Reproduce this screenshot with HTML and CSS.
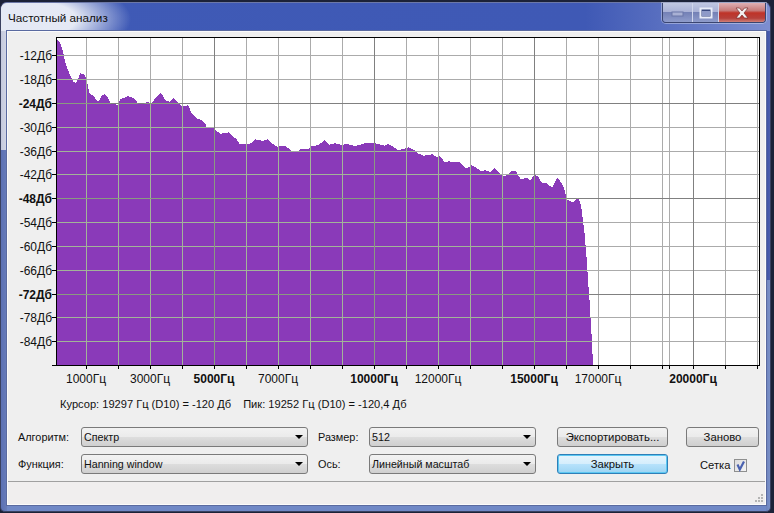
FILE: index.html
```html
<!DOCTYPE html>
<html lang="ru">
<head>
<meta charset="utf-8">
<title>Частотный анализ</title>
<link rel="stylesheet" href="styles.css">
</head>
<body>
<div class="window">
  <header class="titlebar">
    <span class="title">Частотный анализ</span>
    <div class="caption">
      <div class="cap cap-min"><svg width="14" height="8" viewBox="0 0 14 8"><rect x="1" y="3" width="11" height="4" fill="#a8b0d4" stroke="#6a76a8"/></svg></div>
      <div class="cap cap-max"><svg width="14" height="12" viewBox="0 0 14 12"><rect x="1.500" y="1.500" width="11" height="9" fill="#3a4a80" stroke="#e8ecf8" stroke-width="2"/><rect x="3" y="4" width="8" height="5" fill="#8e9ac8"/></svg></div>
      <div class="cap cap-close"><svg width="16" height="12" viewBox="0 0 16 12"><path d="M2 1h3.500L8 4l2.500-3H14l-4 5 4 5h-3.500L8 8l-2.500 3H2l4-5z" fill="#f4f0f0" stroke="#7a3030" stroke-width=".7"/></svg></div>
    </div>
  </header>
  <main class="client">
    <svg class="chart" width="758" height="356" viewBox="8 32 758 356">
      <defs>
        <clipPath id="spectrum-clip"><polygon id="sp" points="57,38 57,39 60,43 62.700,50 64.700,60 67.300,68 70,75 73.300,81.700 76,82.700 78.300,78.300 80,73.300 85,75 87.300,83.300 89.300,93.300 93.300,95.700 96.700,100.700 99.300,100.700 101.700,95.700 105,94 108.300,98.300 111,104.300 115,104.300 118.300,105 120,99.300 128.300,96 135,99 138.300,104 143.300,104 146.700,102.300 151.700,102.700 156,97.700 160,93 162.700,95 165,100 170,101.700 173.300,98.300 176.700,100.700 180,105 182.700,106.300 188.300,105.300 191.700,113.300 196.700,118.300 201.700,120 205,123.300 207.300,128.300 213.300,128 216.700,131 220,133.700 225,133.300 228.300,132.300 233.300,136.700 236.700,139.300 240,144.500 246.700,144 251.700,143.300 255,139.300 258,140 263,141 268,139.300 273,144 277,146.700 285,146 291.700,150.700 296,152.700 300,149.300 308,149.300 311.700,146 318,145.300 325,140 329,144.700 335,143.300 341.700,145 347,144 355,146 365,143.300 373,143 378,144 385,145.700 387.700,144 393,146.700 398,150 405,148.700 408,147.300 413,149.300 418,153.300 423,155.700 430,155 431.700,154 436.700,156.700 440,156 445,162.700 448,161.300 460,162.300 465,167.700 468,167.700 471.700,165 478,169 480.700,171.700 485,170 490,172 495,168 498,171.700 504,176.700 508,174.300 511.700,171 516,171.300 520.700,179.300 526.700,177.700 530,180.700 534,175 538,176 541.700,182.700 547,183.300 552,187.700 556.700,178.300 558,178 563,185.700 565,191.700 566.700,199.300 573,202.700 577.700,197.300 580,201.700 581.700,210 583.300,223.300 584.300,230 585.700,246.700 587,263 588,280 589.300,296.700 590.300,313 591.700,336.700 593,365 57,365"/></clipPath>
        <path id="grid-light" d="M86.500 38V365M118.500 38V365M150.500 38V365M182.500 38V365M246.500 38V365M278.500 38V365M310.500 38V365M342.500 38V365M406.500 38V365M438.500 38V365M470.500 38V365M502.500 38V365M566.500 38V365M598.500 38V365M630.500 38V365M662.500 38V365M669.500 38V365M725.500 38V365M757.500 38V365M57 55.500H759M57 79.500H759M57 127.500H759M57 151.500H759M57 174.500H759M57 222.500H759M57 246.500H759M57 270.500H759M57 317.500H759M57 341.500H759"/>
        <path id="grid-dark" d="M214.500 38V365M374.500 38V365M534.500 38V365M693.500 38V365M57 103.500H759M57 198.500H759M57 294.500H759"/>
      </defs>
      <rect class="plot-bg" x="57" y="38" width="702" height="327"/>
      <use href="#sp" class="spectrum"/>
      <use href="#grid-light" class="line-light"/>
      <use href="#grid-dark" class="line-dark"/>
      <g clip-path="url(#spectrum-clip)">
        <use href="#grid-light" class="over-light"/>
        <use href="#grid-dark" class="over-dark"/>
      </g>
      <path class="axis" d="M56.500 37.500H759.500V365.500H56.500Z"/>
      <path class="axis" d="M52 55.500h4M52 79.500h4M52 103.500h4M52 127.500h4M52 151.500h4M52 174.500h4M52 198.500h4M52 222.500h4M52 246.500h4M52 270.500h4M52 294.500h4M52 317.500h4M52 341.500h4M52 365.500h4M86.500 366v3M118.500 366v3M150.500 366v3M182.500 366v3M214.500 366v3M246.500 366v3M278.500 366v3M310.500 366v3M342.500 366v3M374.500 366v3M406.500 366v3M438.500 366v3M470.500 366v3M502.500 366v3M534.500 366v3M566.500 366v3M598.500 366v3M630.500 366v3M662.500 366v3M669.500 366v3M693.500 366v3M725.500 366v3M757.500 366v3"/>
      <g class="ylabels">
        <text x="52" y="60">-12Дб</text>
        <text x="52" y="84">-18Дб</text>
        <text x="52" y="108" class="strong">-24Дб</text>
        <text x="52" y="132">-30Дб</text>
        <text x="52" y="156">-36Дб</text>
        <text x="52" y="179">-42Дб</text>
        <text x="52" y="203" class="strong">-48Дб</text>
        <text x="52" y="227">-54Дб</text>
        <text x="52" y="251">-60Дб</text>
        <text x="52" y="275">-66Дб</text>
        <text x="52" y="299" class="strong">-72Дб</text>
        <text x="52" y="322">-78Дб</text>
        <text x="52" y="346">-84Дб</text>
      </g>
      <g class="xlabels">
        <text x="86" y="383">1000Гц</text>
        <text x="150" y="383">3000Гц</text>
        <text x="214" y="383" class="strong">5000Гц</text>
        <text x="278" y="383">7000Гц</text>
        <text x="374" y="383" class="strong">10000Гц</text>
        <text x="438" y="383">12000Гц</text>
        <text x="534" y="383" class="strong">15000Гц</text>
        <text x="598" y="383">17000Гц</text>
        <text x="693" y="383" class="strong">20000Гц</text>
      </g>
    </svg>
    <p class="readout"><span>Курсор: 19297 Гц (D10) = -120 Дб</span><span>Пик: 19252 Гц (D10) = -120,4 Дб</span></p>
    <section class="controls">
      <label class="lbl">Алгоритм:</label>
      <div class="combo">Спектр</div>
      <label class="lbl lbl-mid">Размер:</label>
      <div class="combo">512</div>
      <button class="btn btn-wide">Экспортировать...</button>
      <button class="btn btn-last">Заново</button>
      <label class="lbl">Функция:</label>
      <div class="combo">Hanning window</div>
      <label class="lbl lbl-mid">Ось:</label>
      <div class="combo">Линейный масштаб</div>
      <button class="btn btn-wide btn-default">Закрыть</button>
      <div class="gridtoggle"><span>Сетка</span><span class="check"><svg width="13" height="13" viewBox="0 0 13 13"><path d="M3.500 5.500L5.800 10.500 10 2.500" fill="none" stroke="#4a62b0" stroke-width="2.200"/></svg></span></div>
    </section>
    <footer class="statusbar">
      <svg class="grip" width="10" height="10" viewBox="0 0 10 10"><path d="M7 0h2v2H7zM4 3h2v2H4zM7 3h2v2H7zM1 6h2v2H1zM4 6h2v2H4zM7 6h2v2H7z" fill="#b4b4b4"/></svg>
    </footer>
  </main>
</div>
</body>
</html>
```
FILE: styles.css
```css
* { box-sizing: border-box; }
html, body { margin: 0; padding: 0; background: #1c2238; }
body { width: 774px; height: 513px; overflow: hidden; font-family: "Liberation Sans", Arial, sans-serif; font-size: 12px; color: #111; }

.window {
  width: 771px;
  height: 510px;
  margin-top: 2px;
  display: flex;
  flex-direction: column;
  padding: 0 4px 6px 6px;
  border-radius: 7px 7px 5px 5px;
  border: 1px solid #3a4160;
  border-top-color: #6c78a8;
  background:
    linear-gradient(90deg, #c4c9dd, #d3d7e6) left top / 6px 147px no-repeat,
    linear-gradient(90deg, #5c71b4, #687cb9) left 147px / 6px 100% no-repeat,
    linear-gradient(90deg, #3d51a6, #4c60ae) right top / 4px 277px no-repeat,
    linear-gradient(90deg, #6b82bd, #7b91c8) right 277px / 4px 100% no-repeat,
    linear-gradient(#7088c6, #7088c6) left bottom / 100% 6px no-repeat,
    #4f66b6;
}

.titlebar {
  flex: 0 0 28px;
  margin: 0 -4px 0 -6px;
  padding-left: 7px;
  display: flex;
  align-items: flex-start;
  border-radius: 6px 6px 0 0;
  background:
    radial-gradient(ellipse 100px 40px at 30px 16px, rgba(232, 236, 246, .98) 45%, rgba(232, 236, 246, 0) 100%),
    linear-gradient(90deg, #3f5ab6 0, #3f59b5 76%, #7d8ed0 100%);
}
.title { margin-top: 7px; font-size: 11.700px; line-height: 15px; color: #101010; }

.caption { margin-left: auto; margin-right: 4px; display: flex; height: 20px; border: 1px solid #3a4570; border-top: 0; border-radius: 0 0 4px 4px; box-shadow: 0 0 0 1px rgba(255,255,255,.35); overflow: hidden; }
.cap { display: flex; align-items: center; justify-content: center; }
.cap + .cap { border-left: 1px solid #d0d6ec; }
.cap-min, .cap-max { background: linear-gradient(#c0c7e2 0, #aab2d6 45%, #7481b6 50%, #8f9ccb 100%); }
.cap-min { width: 29px; }
.cap-max { width: 26px; }
.cap-close { width: 47px; background: linear-gradient(#e0b0b4 0, #c67a78 40%, #bf3328 52%, #b6403a 80%, #d08078 100%); }

.client {
  flex: 1;
  display: flex;
  flex-direction: column;
  min-height: 0;
  background: #efefef;
  border: 1px solid #fbfbfb;
  outline: 1px solid #5a6aa0;
}
.chart { display: block; flex: none; }

.plot-bg { fill: #fff; }
.spectrum { fill: #8a3ab9; shape-rendering: crispEdges; }
.line-light { fill: none; stroke: #ababab; stroke-width: 1; shape-rendering: crispEdges; }
.line-dark { fill: none; stroke: #808080; stroke-width: 1; shape-rendering: crispEdges; }
.over-light { fill: none; stroke: #a2b498; stroke-width: 1; shape-rendering: crispEdges; }
.over-dark { fill: none; stroke: #8a9a80; stroke-width: 1; shape-rendering: crispEdges; }
.axis { fill: none; stroke: #000; stroke-width: 1; shape-rendering: crispEdges; }

.ylabels text { font-size: 12px; text-anchor: end; fill: #111; }
.xlabels text { font-size: 12px; text-anchor: middle; fill: #111; }
.strong { font-weight: 700; }

.readout { margin: 9px 0 0 52px; height: 14px; line-height: 14px; font-size: 11.100px; display: flex; gap: 12px; }

.controls {
  margin: 16px 0 0 10px;
  display: grid;
  grid-template-columns: 63px 227px 61px 167px 132px 91px;
  grid-auto-rows: 20px;
  row-gap: 7px;
  align-items: center;
}
.lbl { font-size: 10.900px; }
.lbl-mid { margin-left: 10px; }
.combo {
  height: 20px;
  padding-left: 2px;
  line-height: 18px;
  font-size: 10.700px;
  border: 1px solid #7a7a7a;
  border-radius: 3px;
  position: relative;
  background: linear-gradient(#f2f2f2 0, #ebebeb 48%, #dddddd 52%, #cfcfcf 100%);
}
.combo::after {
  content: "";
  position: absolute;
  right: 4px;
  top: 7px;
  border-left: 4px solid transparent;
  border-right: 4px solid transparent;
  border-top: 4px solid #000;
}
.btn {
  height: 20px;
  padding: 0;
  font: 11.300px "Liberation Sans", Arial, sans-serif;
  color: #111;
  border: 1px solid #7a7a7a;
  border-radius: 3px;
  background: linear-gradient(#f2f2f2 0, #ebebeb 48%, #dddddd 52%, #cfcfcf 100%);
}
.btn-wide { width: 111px; margin-left: 21px; }
.btn-last { width: 73px; margin-left: 18px; }
.btn-default {
  border-color: #2f7fb8;
  box-shadow: inset 0 0 0 1px #5cc8f2;
  background: linear-gradient(#e6f5fd 0, #d5eefc 48%, #b6e2fb 52%, #9cd4f3 100%);
}
.gridtoggle { display: flex; align-items: center; margin-left: 32px; gap: 4px; font-size: 11.200px; padding-top: 2px; }
.check { width: 13px; height: 13px; border: 1px solid #8e8f8f; background: linear-gradient(135deg, #dcdcdc, #f4f4f4); display: block; }
.check svg { display: block; margin: -1px; }

.statusbar {
  margin-top: 7px;
  flex: 1;
  border-top: 1px solid #a0a0a0;
  background: #f0eeee;
  position: relative;
}
.grip { position: absolute; right: 1px; bottom: 0; }
```
